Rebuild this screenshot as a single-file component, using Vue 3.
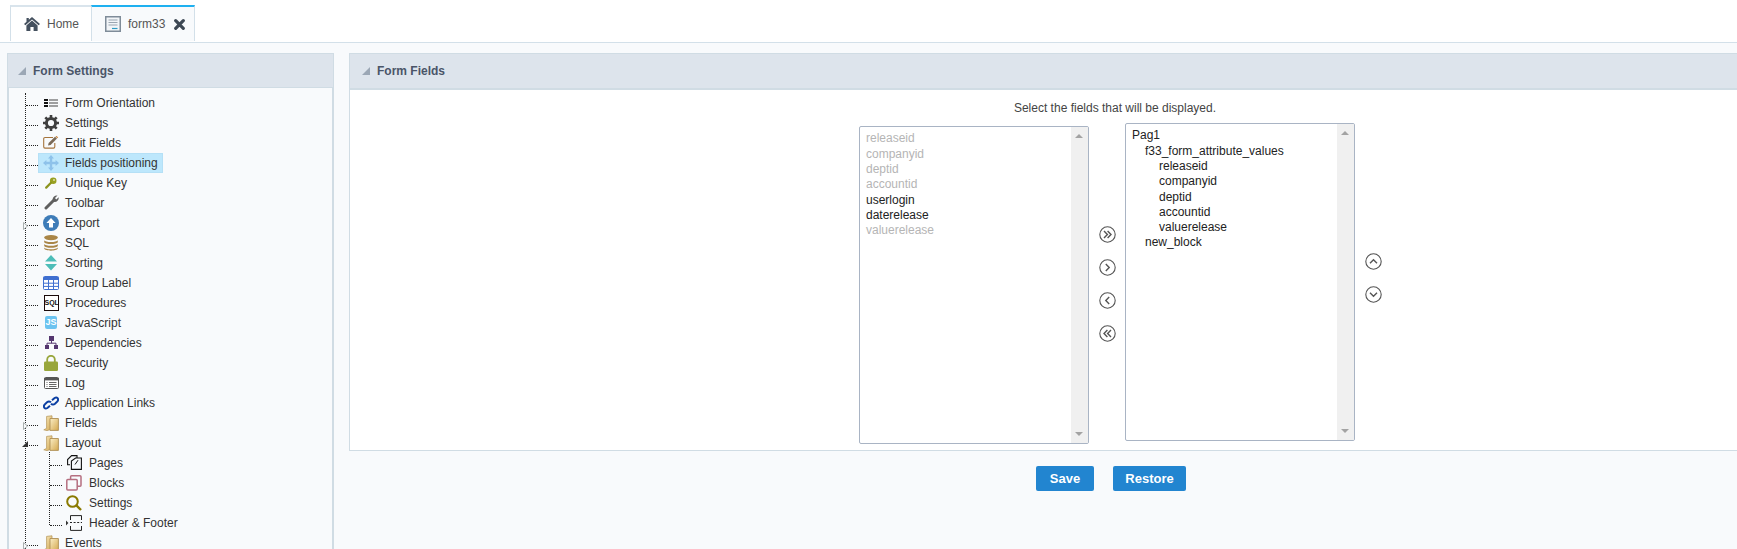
<script setup>
const items = [
  { label: 'Form Orientation', icon: 'orient' },
  { label: 'Settings', icon: 'gear' },
  { label: 'Edit Fields', icon: 'edit' },
  { label: 'Fields positioning', icon: 'move', active: true },
  { label: 'Unique Key', icon: 'key' },
  { label: 'Toolbar', icon: 'wrench' },
  { label: 'Export', icon: 'export', exp: 'closed' },
  { label: 'SQL', icon: 'db' },
  { label: 'Sorting', icon: 'sort' },
  { label: 'Group Label', icon: 'table' },
  { label: 'Procedures', icon: 'proc' },
  { label: 'JavaScript', icon: 'js' },
  { label: 'Dependencies', icon: 'dep' },
  { label: 'Security', icon: 'lock' },
  { label: 'Log', icon: 'log' },
  { label: 'Application Links', icon: 'link' },
  { label: 'Fields', icon: 'folder', exp: 'closed' },
  {
    label: 'Layout', icon: 'folder', exp: 'open',
    children: [
      { label: 'Pages', icon: 'pages' },
      { label: 'Blocks', icon: 'blocks' },
      { label: 'Settings', icon: 'search' },
      { label: 'Header & Footer', icon: 'hf' },
    ],
  },
  { label: 'Events', icon: 'folder', exp: 'closed' },
]
const available = [
  { t: 'releaseid', off: true },
  { t: 'companyid', off: true },
  { t: 'deptid', off: true },
  { t: 'accountid', off: true },
  { t: 'userlogin' },
  { t: 'daterelease' },
  { t: 'valuerelease', off: true },
]
const placed = [
  { t: 'Pag1', d: 0 },
  { t: 'f33_form_attribute_values', d: 1 },
  { t: 'releaseid', d: 2 },
  { t: 'companyid', d: 2 },
  { t: 'deptid', d: 2 },
  { t: 'accountid', d: 2 },
  { t: 'valuerelease', d: 2 },
  { t: 'new_block', d: 1 },
]
const levelClass = (d) => 'lvl' + d
</script>

<template>
  <div class="page">
    <nav class="tabs">
      <div class="tab home">
        <svg class="tab-ico" width="16" height="14" viewBox="0 0 16 14"><path d="M8 0 L16 7 L14.6 8.2 L8 2.4 L1.4 8.2 L0 7 L2.5 4.8 V1 H4.8 V2.8 Z" fill="#44505e"/><path d="M8 3.6 L13.6 8.4 V14 H9.6 V10 H6.4 V14 H2.4 V8.4 Z" fill="#44505e"/></svg>
        <span>Home</span>
      </div>
      <div class="tab current">
        <svg class="tab-ico" width="16" height="16" viewBox="0 0 16 16"><rect x=".75" y=".75" width="14.5" height="14.5" fill="#f2f5f8" stroke="#7f8c99" stroke-width="1.5"/><path d="M3.5 4h9M3.5 6.5h9M3.5 9h9" stroke="#9aa5b0" stroke-width="1"/><path d="M7 12.5h5.5" stroke="#2f9bc4" stroke-width="1.2"/></svg>
        <span>form33</span>
        <svg class="close" width="11" height="11" viewBox="0 0 11 11"><path d="M1.7 1.7 L9.3 9.3 M9.3 1.7 L1.7 9.3" stroke="#3d4854" stroke-width="3.2" stroke-linecap="round"/></svg>
      </div>
    </nav>

    <main class="main">
      <aside class="panel side">
        <header class="panel-head"><i class="tri"></i>Form Settings</header>
        <div class="side-body">
          <ul class="tree">
            <li v-for="it in items" :key="it.label">
              <div class="row">
                <svg v-if="it.exp === 'closed'" class="exp" width="5" height="8" viewBox="0 0 5 8"><path d="M.5 .5 L4.5 4 L.5 7.5 Z" fill="#f8fafc" stroke="#aab0b0"/></svg>
                <i v-else-if="it.exp === 'open'" class="exp-open"></i>
                <span class="dash"></span>
                <span class="item" :class="{ active: it.active }">
                  <span class="ico">
                    <svg v-if="it.icon === 'orient'" width="14" height="8" viewBox="0 0 14 8"><path d="M0 0h4v2H0zM0 3h4v2H0zM0 6h4v2H0z" fill="#111"/><path d="M5 .5h9v1H5zM5 3.5h9v1H5zM5 6.5h9v1H5z" fill="#444"/></svg>
                    <svg v-else-if="it.icon === 'gear'" width="16" height="16" viewBox="0 0 16 16"><circle cx="8" cy="8" r="4.6" fill="none" stroke="#3f3f3f" stroke-width="3"/><path d="M8 0v3M8 13v3M0 8h3M13 8h3M2.3 2.3l2.2 2.2M11.5 11.5l2.2 2.2M13.7 2.3l-2.2 2.2M4.5 11.5l-2.2 2.2" stroke="#3f3f3f" stroke-width="2.6"/></svg>
                    <svg v-else-if="it.icon === 'edit'" width="16" height="13" viewBox="0 0 16 13"><path d="M10 1.5H2a1.3 1.3 0 0 0-1.3 1.3v8a1.3 1.3 0 0 0 1.3 1.3h8.5a1.3 1.3 0 0 0 1.3-1.3V7" fill="none" stroke="#a5743c" stroke-width="1.1"/><path d="M5 9.5 L5.6 7 L12 .8 L14 2.6 L7.6 9 Z" fill="#7a6a58"/><path d="M13 .2l1.8 1.7" stroke="#c9853f" stroke-width="1.2"/></svg>
                    <svg v-else-if="it.icon === 'move'" width="16" height="16" viewBox="0 0 16 16"><path d="M8 0 L11 3.4 H9.2 V6.8 H12.6 V5 L16 8 L12.6 11 V9.2 H9.2 V12.6 H11 L8 16 L5 12.6 H6.8 V9.2 H3.4 V11 L0 8 L3.4 5 V6.8 H6.8 V3.4 H5 Z" fill="#8ec2ea"/></svg>
                    <svg v-else-if="it.icon === 'key'" width="12" height="12" viewBox="0 0 12 12"><circle cx="8.2" cy="3.8" r="3.3" fill="#98a022"/><circle cx="9" cy="3" r=".9" fill="#e6e6b8"/><path d="M6 5.8 L1.2 10.6" stroke="#8c941e" stroke-width="2.2" stroke-linecap="round"/></svg>
                    <svg v-else-if="it.icon === 'wrench'" width="15" height="15" viewBox="0 0 15 15"><path d="M2 13 L9.5 5.5" stroke="#5f5f5f" stroke-width="3" stroke-linecap="round"/><path d="M9 6.5 C7.6 3.4 10 .2 13.5.6 L11 3 L12.2 4.4 L14.7 2.2 C15.2 5.6 12 7.8 9 6.5Z" fill="#5f5f5f"/></svg>
                    <svg v-else-if="it.icon === 'export'" width="16" height="16" viewBox="0 0 16 16"><circle cx="8" cy="8" r="8" fill="#3e7cb8"/><path d="M8 3 L12.6 8 H10 V12.6 H6 V8 H3.4 Z" fill="#fff"/></svg>
                    <svg v-else-if="it.icon === 'db'" width="14" height="16" viewBox="0 0 14 16"><ellipse cx="7" cy="2.6" rx="6.8" ry="2.6" fill="#a98547"/><path d="M.2 5.2C1 7.6 13 7.6 13.8 5.2V7.2C13 9.6 1 9.6.2 7.2ZM.2 9C1 11.4 13 11.4 13.8 9V11C13 13.4 1 13.4.2 11ZM.2 12.4C1 14.8 13 14.8 13.8 12.4V13.6C13 16.4 1 16.4.2 13.6Z" fill="#a98547"/></svg>
                    <svg v-else-if="it.icon === 'sort'" width="12" height="16" viewBox="0 0 12 16"><path d="M6 0 L12 6.6 H0 Z M0 9 H12 L6 15.6 Z" fill="#4dbdb8"/></svg>
                    <svg v-else-if="it.icon === 'table'" width="16" height="14" viewBox="0 0 16 14"><rect x=".5" y=".5" width="15" height="13" rx="1" fill="#fff" stroke="#3f6fd0"/><path d="M.5 1h15v3h-15z" fill="#3f6fd0"/><path d="M.5 7.2h15M.5 10.4h15M5.5 1v12.5M10.5 1v12.5" stroke="#3f6fd0"/></svg>
                    <span v-else-if="it.icon === 'proc'" class="proc">SQL</span>
                    <span v-else-if="it.icon === 'js'" class="js">JS</span>
                    <svg v-else-if="it.icon === 'dep'" width="13" height="13" viewBox="0 0 13 13"><path d="M4 0h5v5H4zM0 9h4v4H0zM9 9h4v4H9z" fill="#54366f"/><path d="M6.5 5v2.2M2 9V7.2h9V9" fill="none" stroke="#54366f"/></svg>
                    <svg v-else-if="it.icon === 'lock'" width="14" height="16" viewBox="0 0 14 16"><path d="M3.2 7V4.6a3.8 3.8 0 0 1 7.6 0V7" fill="none" stroke="#98a63c" stroke-width="1.8"/><rect y="6.6" width="14" height="9.4" rx="1.2" fill="#98a63c"/></svg>
                    <svg v-else-if="it.icon === 'log'" width="15" height="12" viewBox="0 0 15 12"><rect x=".5" y=".5" width="14" height="11" rx="1" fill="#fff" stroke="#555"/><path d="M0 1h15v2.4H0z" fill="#555"/><path d="M2.5 5.5h1M5 5.5h7.5M2.5 7.5h1M5 7.5h7.5M2.5 9.5h1M5 9.5h7.5" stroke="#666"/></svg>
                    <svg v-else-if="it.icon === 'link'" width="16" height="14" viewBox="0 0 16 14"><path d="M7 9.8 L4.4 12 C2 13.6-.2 11 1.6 8.6 L4 6.2 C5.4 5 7 5.2 8 6.4" fill="none" stroke="#0b3fa3" stroke-width="2"/><path d="M9 4.2 L11.6 2 C14 .4 16.2 3 14.4 5.4 L12 7.8 C10.6 9 9 8.8 8 7.6" fill="none" stroke="#0b3fa3" stroke-width="2"/></svg>
                    <svg v-else-if="it.icon === 'folder'" width="16" height="16" viewBox="0 0 16 16"><defs><linearGradient id="fg" x1="0" y1="0" x2="1" y2="1"><stop offset="0" stop-color="#fbeec6"/><stop offset="1" stop-color="#d4a84f"/></linearGradient></defs><path d="M.8 14.8 L3.6 13.4 V1.4 L9 .8 V14 L4 15.6 Z" fill="url(#fg)" stroke="#b99a60" stroke-width=".8"/><path d="M7 3.5 H15.4 V15.4 H7 Z" fill="url(#fg)" stroke="#ae8e55" stroke-width=".9"/></svg>
                  </span>
                  <span>{{ it.label }}</span>
                </span>
              </div>
              <ul v-if="it.children" class="sub">
                <li v-for="c in it.children" :key="c.label">
                  <div class="row">
                    <span class="dash"></span>
                    <span class="item">
                      <span class="ico">
                        <svg v-if="c.icon === 'pages'" width="15" height="15" viewBox="0 0 15 15"><path d="M3 9.8H.6V4.6L4.6.6H10V3" fill="none" stroke="#111" stroke-width="1.1"/><path d="M4.4 14.4V6L8.6 3H14.4V14.4Z" fill="#f8fafc" stroke="#111" stroke-width="1.1"/><path d="M8 9.5 L11 5.2" stroke="#111"/></svg>
                        <svg v-else-if="c.icon === 'blocks'" width="16" height="16" viewBox="0 0 16 16"><rect x="4.6" y=".8" width="10.4" height="10.4" rx="1" fill="none" stroke="#b56f80" stroke-width="1.5"/><rect x=".8" y="4.6" width="10.4" height="10.4" rx="1" fill="#f8fafc" stroke="#b56f80" stroke-width="1.5"/></svg>
                        <svg v-else-if="c.icon === 'search'" width="16" height="16" viewBox="0 0 16 16"><circle cx="6.5" cy="6.5" r="5.3" fill="none" stroke="#8a7a00" stroke-width="2"/><path d="M10.4 10.4 L15 15" stroke="#8a7a00" stroke-width="2.4"/></svg>
                        <svg v-else width="16" height="16" viewBox="0 0 16 16"><path d="M0 5.6 L2.4 8 L0 10.4Z" fill="#333"/><path d="M4.5 5V.6H15.5V5M4.5 11V15.4H15.5V11" fill="none" stroke="#222"/><path d="M4 7.5H16" stroke="#222" stroke-dasharray="2 1.6"/></svg>
                      </span>
                      <span>{{ c.label }}</span>
                    </span>
                  </div>
                </li>
              </ul>
            </li>
          </ul>
        </div>
      </aside>

      <section class="content">
        <div class="panel fields">
          <header class="panel-head tall"><i class="tri"></i>Form Fields</header>
          <div class="fields-body">
            <p class="hint">Select the fields that will be displayed.</p>
            <div class="dual">
              <div class="listbox left">
                <div class="opts">
                  <div v-for="a in available" :key="a.t" class="opt" :class="{ off: a.off }">{{ a.t }}</div>
                </div>
                <div class="sb"><i class="up"></i><i class="down"></i></div>
              </div>
              <div class="arrows">
                <svg width="17" height="17" viewBox="0 0 17 17"><circle cx="8.5" cy="8.5" r="7.7" class="c"/><path d="M5 5 L8.4 8.5 L5 12 M8.6 5 L12 8.5 L8.6 12" class="a"/></svg>
                <svg width="17" height="17" viewBox="0 0 17 17"><circle cx="8.5" cy="8.5" r="7.7" class="c"/><path d="M6.8 5 L10.2 8.5 L6.8 12" class="a"/></svg>
                <svg width="17" height="17" viewBox="0 0 17 17"><circle cx="8.5" cy="8.5" r="7.7" class="c"/><path d="M10.2 5 L6.8 8.5 L10.2 12" class="a"/></svg>
                <svg width="17" height="17" viewBox="0 0 17 17"><circle cx="8.5" cy="8.5" r="7.7" class="c"/><path d="M8.4 5 L5 8.5 L8.4 12 M12 5 L8.6 8.5 L12 12" class="a"/></svg>
              </div>
              <div class="listbox">
                <div class="opts">
                  <div v-for="p in placed" :key="p.t + p.d" class="opt" :class="levelClass(p.d)">{{ p.t }}</div>
                </div>
                <div class="sb"><i class="up"></i><i class="down"></i></div>
              </div>
              <div class="arrows updown">
                <svg width="17" height="17" viewBox="0 0 17 17"><circle cx="8.5" cy="8.5" r="7.7" class="c"/><path d="M5 10.2 L8.5 6.8 L12 10.2" class="a"/></svg>
                <svg width="17" height="17" viewBox="0 0 17 17"><circle cx="8.5" cy="8.5" r="7.7" class="c"/><path d="M5 6.8 L8.5 10.2 L12 6.8" class="a"/></svg>
              </div>
            </div>
          </div>
        </div>
        <div class="actions">
          <button class="btn save">Save</button>
          <button class="btn restore">Restore</button>
        </div>
      </section>
    </main>
  </div>
</template>

<style>
html, body { margin: 0; overflow: hidden; background: #f8fafc; }
</style>

<style scoped>
.page {
  width: 1737px;
  height: 549px;
  overflow: hidden;
  background: #f8fafc;
  font-family: "Liberation Sans", Arial, sans-serif;
  font-size: 12px;
  color: #333;
}
ul { list-style: none; margin: 0; padding: 0; }
.tabs {
  display: flex;
  height: 37px;
  padding: 5px 0 0 10px;
  background: #fff;
  border-bottom: 1px solid #d3e0e9;
}
.tab {
  display: flex;
  align-items: center;
  height: 36px;
  box-sizing: border-box;
  border-top: 2px solid #d9e4ec;
  border-left: 1px solid #d3e0e9;
  color: #555;
  font-size: 12px;
}
.home { width: 81px; padding-left: 13px; background: #fff; }
.home .tab-ico { margin-right: 7px; }
.current {
  width: 104px;
  padding-left: 13px;
  background: #f8fafc;
  border-top: 2px solid #1eb0f0;
  border-right: 1px solid #d3e0e9;
}
.current .tab-ico { margin-right: 7px; }
.close { margin-left: 9px; }

.main {
  display: flex;
  gap: 15px;
  align-items: flex-start;
  padding: 10px 0 0 7px;
}
.panel-head {
  display: flex;
  align-items: center;
  box-sizing: border-box;
  height: 35px;
  padding-left: 7px;
  background: #dde4ec;
  border-bottom: 1px solid #d0dce4;
  border-top: 1px solid #d0dce4;
  color: #4a5568;
  font-weight: bold;
  font-size: 12px;
}
.panel-head.tall { height: 37px; border-bottom-width: 2px; padding-left: 9px; }
.tri {
  width: 0;
  height: 0;
  margin: 0 7px 0 3px;
  border-left: 8px solid transparent;
  border-bottom: 8px solid #9ba7b5;
}
.side {
  flex: 0 0 327px;
  box-sizing: border-box;
  border-left: 1px solid #d0dce4;
  border-right: 1px solid #d0dce4;
  height: 520px;
}
.side-body {
  padding: 5px 0 0 0;
  border-left: 1px solid #d0dce4;
  border-right: 1px solid #d0dce4;
  height: 480px;
}
.tree {
  position: relative;
  margin-left: 16px;
  border-left: 1px dotted #222;
  color: #333;
}
.row {
  position: relative;
  display: flex;
  align-items: flex-start;
  height: 20px;
}
.dash {
  flex: 0 0 12px;
  height: 12px;
  border-bottom: 1px dotted #222;
}
.item {
  display: flex;
  align-items: center;
  box-sizing: border-box;
  height: 20px;
  padding: 0 5px 1px 0;
  line-height: 18px;
  white-space: nowrap;
}
.item.active { background: #bde7fc; box-shadow: inset 0 0 0 1px #b5e0f6; }
.ico {
  display: flex;
  flex: 0 0 27px;
  align-items: center;
  justify-content: center;
  height: 19px;
  box-sizing: border-box;
  padding-right: 1px;
}
.sub .ico { padding-right: 3px; }
.exp {
  position: absolute;
  left: -3px;
  top: 9px;
}
.exp-open {
  position: absolute;
  left: -4px;
  top: 8px;
  width: 0;
  height: 0;
  border-left: 6px solid transparent;
  border-bottom: 6px solid #333;
}
.sub {
  position: relative;
  margin-left: 24px;
}
.sub::before {
  content: "";
  position: absolute;
  left: -1px;
  top: -1px;
  bottom: 8px;
  border-left: 1px dotted #222;
}

.proc {
  box-sizing: border-box;
  display: block;
  width: 15px;
  height: 16px;
  border: 1px solid #1a0a0a;
  background: #fff;
  color: #111;
  font-size: 7px;
  font-weight: bold;
  line-height: 14px;
  text-align: center;
}
.js {
  display: block;
  width: 12px;
  height: 13px;
  border-radius: 2px;
  background: #6cc3f0;
  color: #fff;
  font-size: 9px;
  font-weight: bold;
  line-height: 13px;
  text-align: center;
}

.content { flex: 0 0 1531px; }
.fields {
  background: #fff;
  border-left: 1px solid #d0dce4;
  border-bottom: 1px solid #d0dce4;
}
.fields-body {
  box-sizing: border-box;
  height: 360px;
  padding-top: 11px;
}
.hint {
  margin: 0;
  height: 22px;
  line-height: 15px;
  text-align: center;
  color: #444;
}
.dual {
  display: flex;
  align-items: flex-start;
  margin-left: 509px;
}
.listbox {
  display: flex;
  flex: 0 0 230px;
  box-sizing: border-box;
  height: 318px;
  border: 1px solid #a9b4c4;
  border-radius: 2px;
  background: #fff;
  overflow: hidden;
}
.left { margin-top: 3px; }
.opts {
  flex: 1;
  padding: 4.2px 0 0 6px;
}
.opt {
  height: 15.33px;
  line-height: 15.33px;
  color: #222;
}
.opt.off { color: #b5b5b5; }
.lvl1 { padding-left: 13px; }
.lvl2 { padding-left: 27px; }
.sb {
  position: relative;
  flex: 0 0 17px;
  background: #f0f0f0;
}
.sb i {
  position: absolute;
  left: 4px;
  width: 0;
  height: 0;
  border-left: 4px solid transparent;
  border-right: 4px solid transparent;
}
.sb .up { top: 7px; border-bottom: 4px solid #a3a3a3; }
.sb .down { bottom: 7px; border-top: 4px solid #a3a3a3; }
.arrows {
  display: flex;
  flex-direction: column;
  flex: 0 0 36px;
  align-items: center;
  gap: 16px;
  padding-top: 103px;
}
.arrows.updown { padding-top: 130px; }
.c { fill: none; stroke: #555; stroke-width: 1.1; }
.a { fill: none; stroke: #555; stroke-width: 1.4; }

.actions {
  display: flex;
  justify-content: center;
  gap: 19px;
  padding: 15px 7px 0 0;
}
.btn {
  box-sizing: border-box;
  height: 25px;
  padding: 0;
  border: 0;
  border-radius: 2px;
  background: #2285d0;
  color: #fff;
  font-family: "Liberation Sans", Arial, sans-serif;
  font-size: 13px;
  font-weight: bold;
}
.save { width: 58px; }
.restore { width: 73px; }
</style>
